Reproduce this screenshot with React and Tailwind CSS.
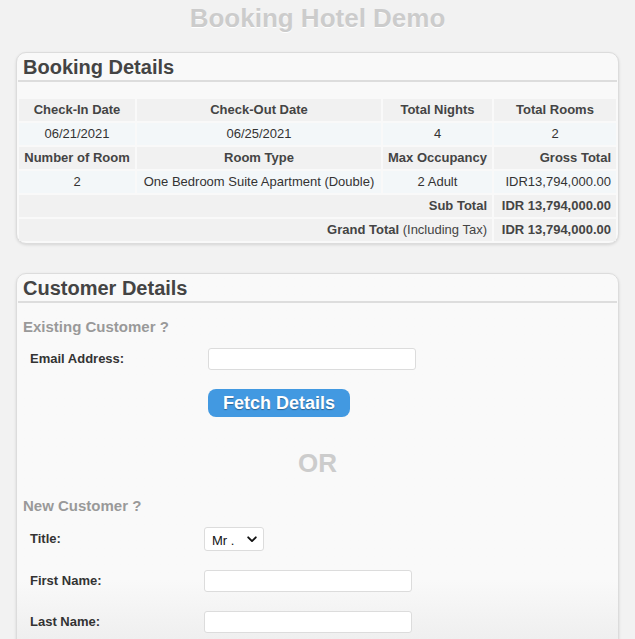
import React from "react";

const font = { fontFamily: '"Liberation Sans", Arial, Helvetica, sans-serif' };

function Card({ title, children, className = "" }) {
  return (
    <div className={"rounded-[10px] border border-[#dcdcdc] shadow-[0_1px_3px_rgba(0,0,0,0.12)] " + className}>
      <h2 className="mx-px border-b-2 border-[#ddd] px-[5px] pt-[2px] pb-[1px] text-[20px] font-bold leading-[24px] text-[#444]">
        {title}
      </h2>
      {children}
    </div>
  );
}

const th = "bg-[#f1f1f1] px-[5px] py-[3px] font-bold leading-[16px] text-[#444]";
const td = "bg-[#f3f7f9] px-[5px] py-[3px] leading-[16px] text-[#333]";

function BookingTable() {
  return (
    <table className="mt-[15px] w-full table-fixed border-separate border-spacing-[2px] text-[13px]">
      <colgroup>
        <col className="w-[116px]" />
        <col className="w-[244px]" />
        <col className="w-[109px]" />
        <col className="w-[122px]" />
      </colgroup>
      <tbody>
        <tr>
          <th className={th}>Check-In Date</th>
          <th className={th}>Check-Out Date</th>
          <th className={th}>Total Nights</th>
          <th className={th}>Total Rooms</th>
        </tr>
        <tr>
          <td className={td + " text-center"}>06/21/2021</td>
          <td className={td + " text-center"}>06/25/2021</td>
          <td className={td + " text-center"}>4</td>
          <td className={td + " text-center"}>2</td>
        </tr>
        <tr>
          <th className={th}>Number of Room</th>
          <th className={th}>Room Type</th>
          <th className={th}>Max Occupancy</th>
          <th className={th + " text-right"}>Gross Total</th>
        </tr>
        <tr>
          <td className={td + " text-center"}>2</td>
          <td className={td + " text-center"}>One Bedroom Suite Apartment (Double)</td>
          <td className={td + " text-center"}>2 Adult</td>
          <td className={td + " text-right"}>IDR13,794,000.00</td>
        </tr>
        <tr>
          <td colSpan={3} className={th + " text-right"}>Sub Total</td>
          <td className={th + " text-right"}>IDR 13,794,000.00</td>
        </tr>
        <tr>
          <td colSpan={3} className={th + " text-right"}>
            Grand Total <span className="font-normal">(Including Tax)</span>
          </td>
          <td className={th + " text-right"}>IDR 13,794,000.00</td>
        </tr>
      </tbody>
    </table>
  );
}

function Field({ label, children, inputLeft = "pl-[181px]" }) {
  return (
    <div className="relative flex items-center">
      <span className="absolute left-[7px] text-[13px] font-bold text-[#333]">{label}</span>
      <div className={inputLeft}>{children}</div>
    </div>
  );
}

const inputCls = "block h-[22px] rounded-[3px] border border-[#dcdcdc] bg-white px-1 text-[13px] outline-none";

export default function App() {
  return (
    <div className="min-h-screen bg-[#f2f2f2] px-4 pb-10" style={font}>
      <h1 className="pt-[3px] text-center text-[26px] font-bold leading-[30px] text-[#cccccc] [text-shadow:0_1px_0_#fff]">
        Booking Hotel Demo
      </h1>

      <Card title="Booking Details" className="mt-[19px] bg-[#f9f9f9]">
        <BookingTable />
      </Card>

      <Card
        title="Customer Details"
        className="mt-[29px] bg-gradient-to-b from-[#f9f9f9] from-80% to-[#ececec] pb-[24px]"
      >
        <div className="px-[6px]">
          <h3 className="mt-[15px] text-[15px] font-bold leading-[18px] text-[#999]">Existing Customer ?</h3>

          <div className="mt-[12px]">
            <Field label="Email Address:" inputLeft="pl-[185px]">
              <input type="text" className={inputCls + " w-[208px]"} />
            </Field>
          </div>

          <div className="mt-[19px] pl-[185px]">
            <button className="h-[28px] w-[142px] rounded-[8px] bg-[#4299e1] text-[18px] font-bold text-white [text-shadow:0_1px_1px_rgba(0,0,0,0.35)]">
              Fetch Details
            </button>
          </div>

          <div className="mt-[32px] text-center text-[26px] font-bold leading-[28px] text-[#cccccc]">OR</div>

          <h3 className="mt-[20px] text-[15px] font-bold leading-[18px] text-[#999]">New Customer ?</h3>

          <div className="mt-[12px]">
            <Field label="Title:">
              <div className="relative h-[24px] w-[60px] rounded-[3px] border border-[#dcdcdc] bg-white">
                <select className="h-full w-full appearance-none bg-transparent pl-[7px] text-[13px] text-[#111] outline-none">
                  <option>Mr .</option>
                  <option>Mrs .</option>
                  <option>Ms .</option>
                </select>
                <svg
                  className="pointer-events-none absolute right-[6px] top-[8px]"
                  width="10"
                  height="7"
                  viewBox="0 0 10 7"
                  fill="none"
                >
                  <path d="M1.2 1.3 5 5.1 8.8 1.3" stroke="#111" strokeWidth="1.9" strokeLinecap="round" strokeLinejoin="round" />
                </svg>
              </div>
            </Field>
          </div>

          <div className="mt-[19px]">
            <Field label="First Name:">
              <input type="text" className={inputCls + " w-[208px]"} />
            </Field>
          </div>

          <div className="mt-[19px]">
            <Field label="Last Name:">
              <input type="text" className={inputCls + " w-[208px]"} />
            </Field>
          </div>
        </div>
      </Card>
    </div>
  );
}
